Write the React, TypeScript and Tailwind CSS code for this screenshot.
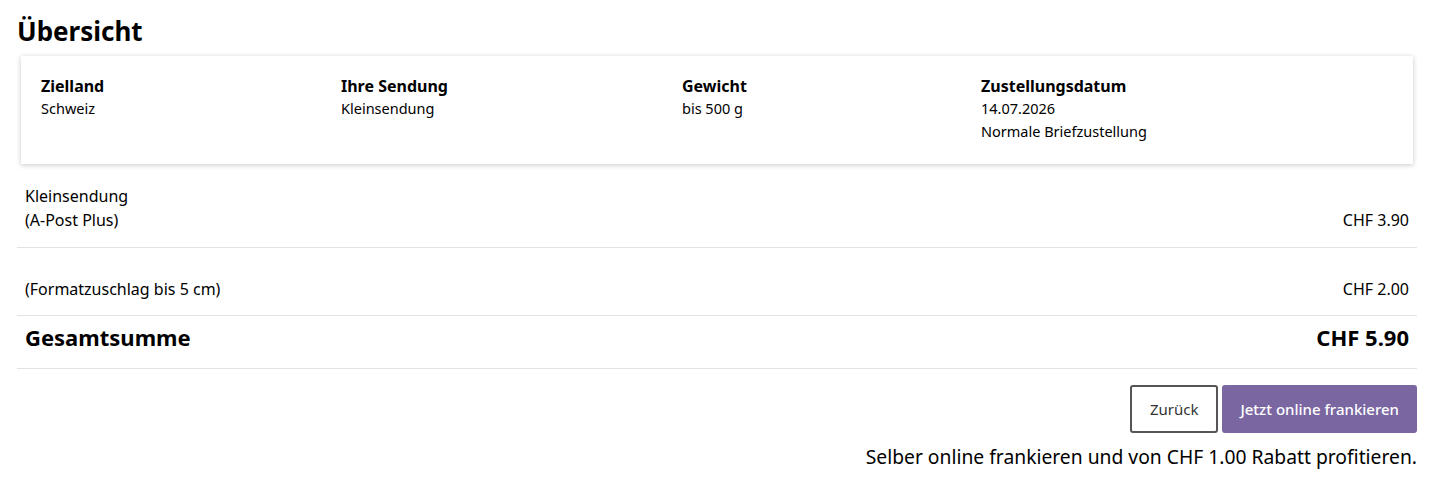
import React from 'react';

interface InfoCol {
  label: string;
  lines: string[];
  width: string;
}

const cols: InfoCol[] = [
  { label: 'Zielland', lines: ['Schweiz'], width: 'w-[300px]' },
  { label: 'Ihre Sendung', lines: ['Kleinsendung'], width: 'w-[341px]' },
  { label: 'Gewicht', lines: ['bis 500 g'], width: 'w-[299px]' },
  { label: 'Zustellungsdatum', lines: ['14.07.2026', 'Normale Briefzustellung'], width: 'flex-1' },
];

const App: React.FC = () => {
  return (
    <div className="pl-[17px] pr-[14px] pt-[13px] text-black bg-white" style={{ fontFamily: '"Noto Sans", "Open Sans", sans-serif' }}>
      <h1 className="text-[26px] leading-[36px] font-bold">Übersicht</h1>

      {/* card */}
      <div className="mt-[7px] mx-[4px] flex px-[20px] pt-[19px] pb-[21px] bg-white shadow-[0_1px_5px_rgba(0,0,0,0.22)]">
        {cols.map((c) => (
          <div key={c.label} className={c.width}>
            <p className="text-[16px] leading-[22px] font-bold">{c.label}</p>
            {c.lines.map((l) => (
              <p key={l} className="text-[14.5px] leading-[24px] -mt-[1px]">{l}</p>
            ))}
          </div>
        ))}
      </div>

      {/* price rows */}
      <div className="mt-[8px] px-2 pt-[12px] pb-[15px] border-b border-[#e3e3e3] flex justify-between items-end text-[16px] leading-[24px]">
        <div>
          <p>Kleinsendung</p>
          <p>(A-Post Plus)</p>
        </div>
        <p>CHF 3.90</p>
      </div>
      <div className="px-2 pt-[29px] pb-[14px] border-b border-[#e3e3e3] flex justify-between text-[16px] leading-[24px]">
        <p>(Formatzuschlag bis 5 cm)</p>
        <p>CHF 2.00</p>
      </div>
      <div className="px-2 pt-[6px] pb-[16px] border-b border-[#e3e3e3] flex justify-between text-[22px] leading-[30px] font-bold">
        <p>Gesamtsumme</p>
        <p>CHF 5.90</p>
      </div>

      {/* actions */}
      <div className="mt-[16px] flex justify-end gap-[4px]">
        <button className="h-[48px] px-[18px] border-2 border-[#555] rounded-[3px] text-[15px] text-[#333] bg-white">
          Zurück
        </button>
        <button className="h-[48px] px-[18px] rounded-[3px] text-[15px] font-medium text-white bg-[#7a67a2]">
          Jetzt online frankieren
        </button>
      </div>
      <p className="mt-[10px] text-right text-[19.3px] leading-[28px]">
        Selber online frankieren und von CHF 1.00 Rabatt profitieren.
      </p>
    </div>
  );
};

export default App;
